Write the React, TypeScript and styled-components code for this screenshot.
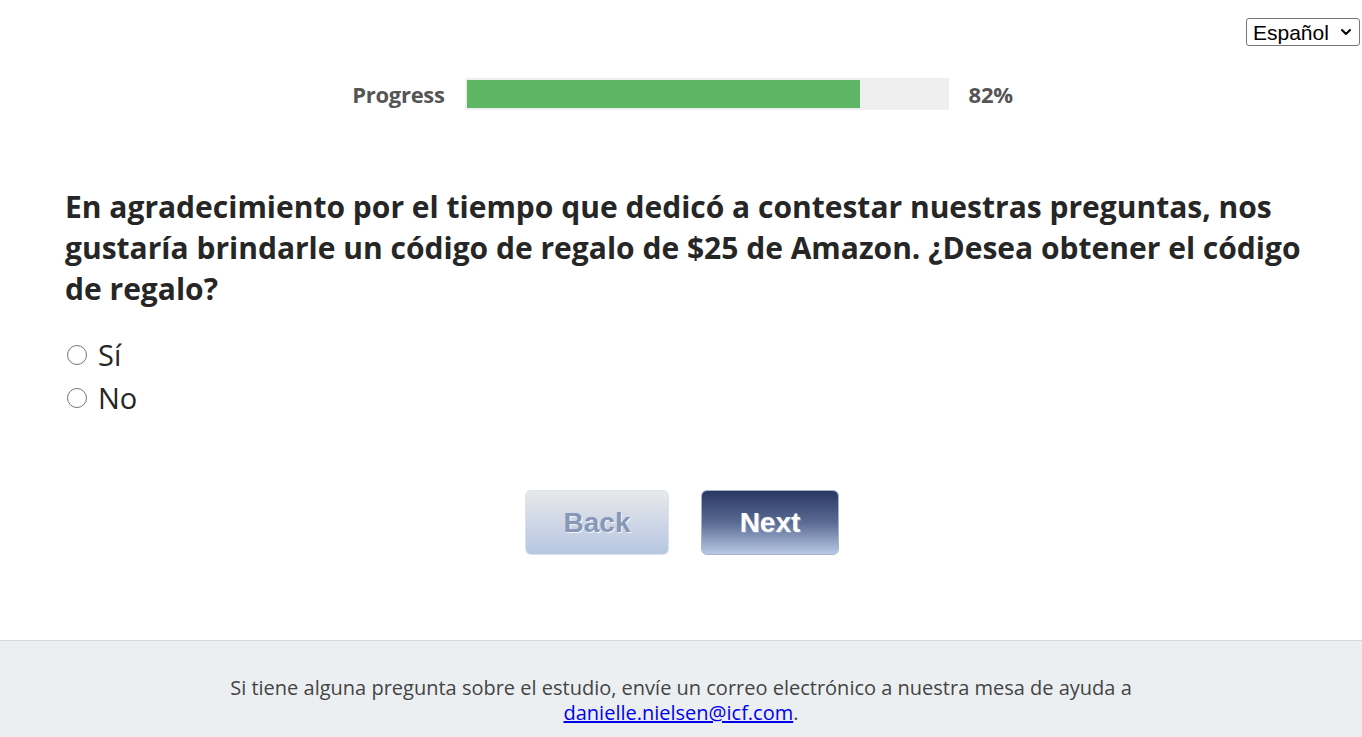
import styled, { createGlobalStyle } from "styled-components";
import { ChevronDown } from "lucide-react";

const GlobalStyle = createGlobalStyle`
    html, body {
        margin: 0;
        padding: 0;
        background: #ffffff;
    }
    body {
        font-family: "Open Sans", Arial, sans-serif;
    }
`;

const PROGRESS = 82;

const App = () => {
    return (
        <>
            <GlobalStyle />
            <Page>
                <Main>
                    <LangRow>
                        <LangWrap>
                            <LangSelect defaultValue="es">
                                <option value="en">English</option>
                                <option value="es">Español</option>
                            </LangSelect>
                            <LangChevron size={16} strokeWidth={3} />
                        </LangWrap>
                    </LangRow>

                    <ProgressRow>
                        <ProgressLabel>Progress</ProgressLabel>
                        <ProgressTrack>
                            <ProgressFill style={{ width: `${PROGRESS}%` }} />
                        </ProgressTrack>
                        <ProgressLabel>{PROGRESS}%</ProgressLabel>
                    </ProgressRow>

                    <Question>
                        En agradecimiento por el tiempo que dedicó a contestar nuestras preguntas, nos
                        gustaría brindarle un código de regalo de $25 de Amazon. ¿Desea obtener el código
                        de regalo?
                    </Question>

                    <Options>
                        <Option>
                            <Radio type="radio" name="gift" />
                            <span>Sí</span>
                        </Option>
                        <Option>
                            <Radio type="radio" name="gift" />
                            <span>No</span>
                        </Option>
                    </Options>

                    <ButtonRow>
                        <NavButton $variant="back">Back</NavButton>
                        <NavButton $variant="next">Next</NavButton>
                    </ButtonRow>
                </Main>

                <Footer>
                    Si tiene alguna pregunta sobre el estudio, envíe un correo electrónico a nuestra mesa de ayuda a
                    <br />
                    <a href="#">danielle.nielsen@icf.com</a>.
                </Footer>
            </Page>
        </>
    );
};

/**************** PAGE *************************/
const Page = styled.div`
    display: flex;
    flex-direction: column;
    min-height: 737px;
`;

const Main = styled.div`
    flex: 1;
    display: flex;
    flex-direction: column;
`;

const LangRow = styled.div`
    display: flex;
    justify-content: flex-end;
    padding: 18px 2px 0 0;
`;

const LangWrap = styled.div`
    position: relative;
    display: flex;
`;

const LangSelect = styled.select`
    appearance: none;
    font-family: Arial, "Liberation Sans", sans-serif;
    font-size: 21px;
    height: 28px;
    width: 114px;
    padding: 0 26px 0 6px;
    border: 1px solid #767676;
    border-radius: 3px;
    background: #fff;
    color: #000;
`;

const LangChevron = styled(ChevronDown)`
    position: absolute;
    right: 6px;
    top: 6px;
    color: #000;
    pointer-events: none;
`;

/**************** PROGRESS *************************/
const ProgressRow = styled.div`
    display: flex;
    align-items: center;
    justify-content: center;
    gap: 20px;
    margin-top: 32px;
    padding-left: 3px;
`;

const ProgressLabel = styled.div`
    font-size: 22px;
    font-weight: 700;
    color: #555;
    letter-spacing: -0.3px;
`;

const ProgressTrack = styled.div`
    width: 484px;
    height: 32px;
    background: #efefef;
    padding: 2px;
    box-sizing: border-box;
`;

const ProgressFill = styled.div`
    height: 100%;
    background: #5cb663;
`;

/**************** QUESTION *************************/
const Question = styled.h2`
    margin: 76px 0 0 65px;
    max-width: 1250px;
    font-size: 30px;
    line-height: 41px;
    font-weight: 700;
    color: #262626;
`;

const Options = styled.div`
    display: flex;
    flex-direction: column;
    gap: 4px;
    margin: 26px 0 0 65px;
`;

const Option = styled.label`
    display: flex;
    align-items: center;
    gap: 11px;
    height: 39px;
    font-size: 29px;
    color: #262626;
`;

const Radio = styled.input`
    width: 20px;
    height: 20px;
    margin: 0 0 0 2px;
    accent-color: #555;
`;

/**************** BUTTONS *************************/
const ButtonRow = styled.div`
    display: flex;
    justify-content: center;
    gap: 32px;
    margin-top: 73px;
    margin-bottom: 85px;
    padding-left: 2px;
`;

const NavButton = styled.button<{ $variant: "back" | "next" }>`
    width: ${(p) => (p.$variant === "back" ? "144px" : "138px")};
    height: 65px;
    border-radius: 6px;
    border: 1px solid ${(p) => (p.$variant === "back" ? "#dde3ec" : "#a6b4cf")};
    font-family: Arial, "Liberation Sans", sans-serif;
    font-size: 28px;
    font-weight: 700;
    cursor: pointer;
    background: ${(p) =>
        p.$variant === "back"
            ? "linear-gradient(to bottom, #e7e8ea 0%, #b6c6e2 100%)"
            : "linear-gradient(to bottom, #293763 0%, #5b6a93 50%, #b8c8e5 100%)"};
    color: ${(p) => (p.$variant === "back" ? "#8798b6" : "#ffffff")};
    text-shadow: ${(p) => (p.$variant === "back" ? "1px 1px 0 #f4f6fa" : "1px 1px 0 #8ea2c8")};
`;

/**************** FOOTER *************************/
const Footer = styled.div`
    border-top: 1px solid #d6d9dc;
    background: #eceff2;
    padding: 34px 20px 12px;
    text-align: center;
    font-size: 20px;
    line-height: 25px;
    color: #444;

    a {
        color: #0000ee;
    }
`;

export default App;
